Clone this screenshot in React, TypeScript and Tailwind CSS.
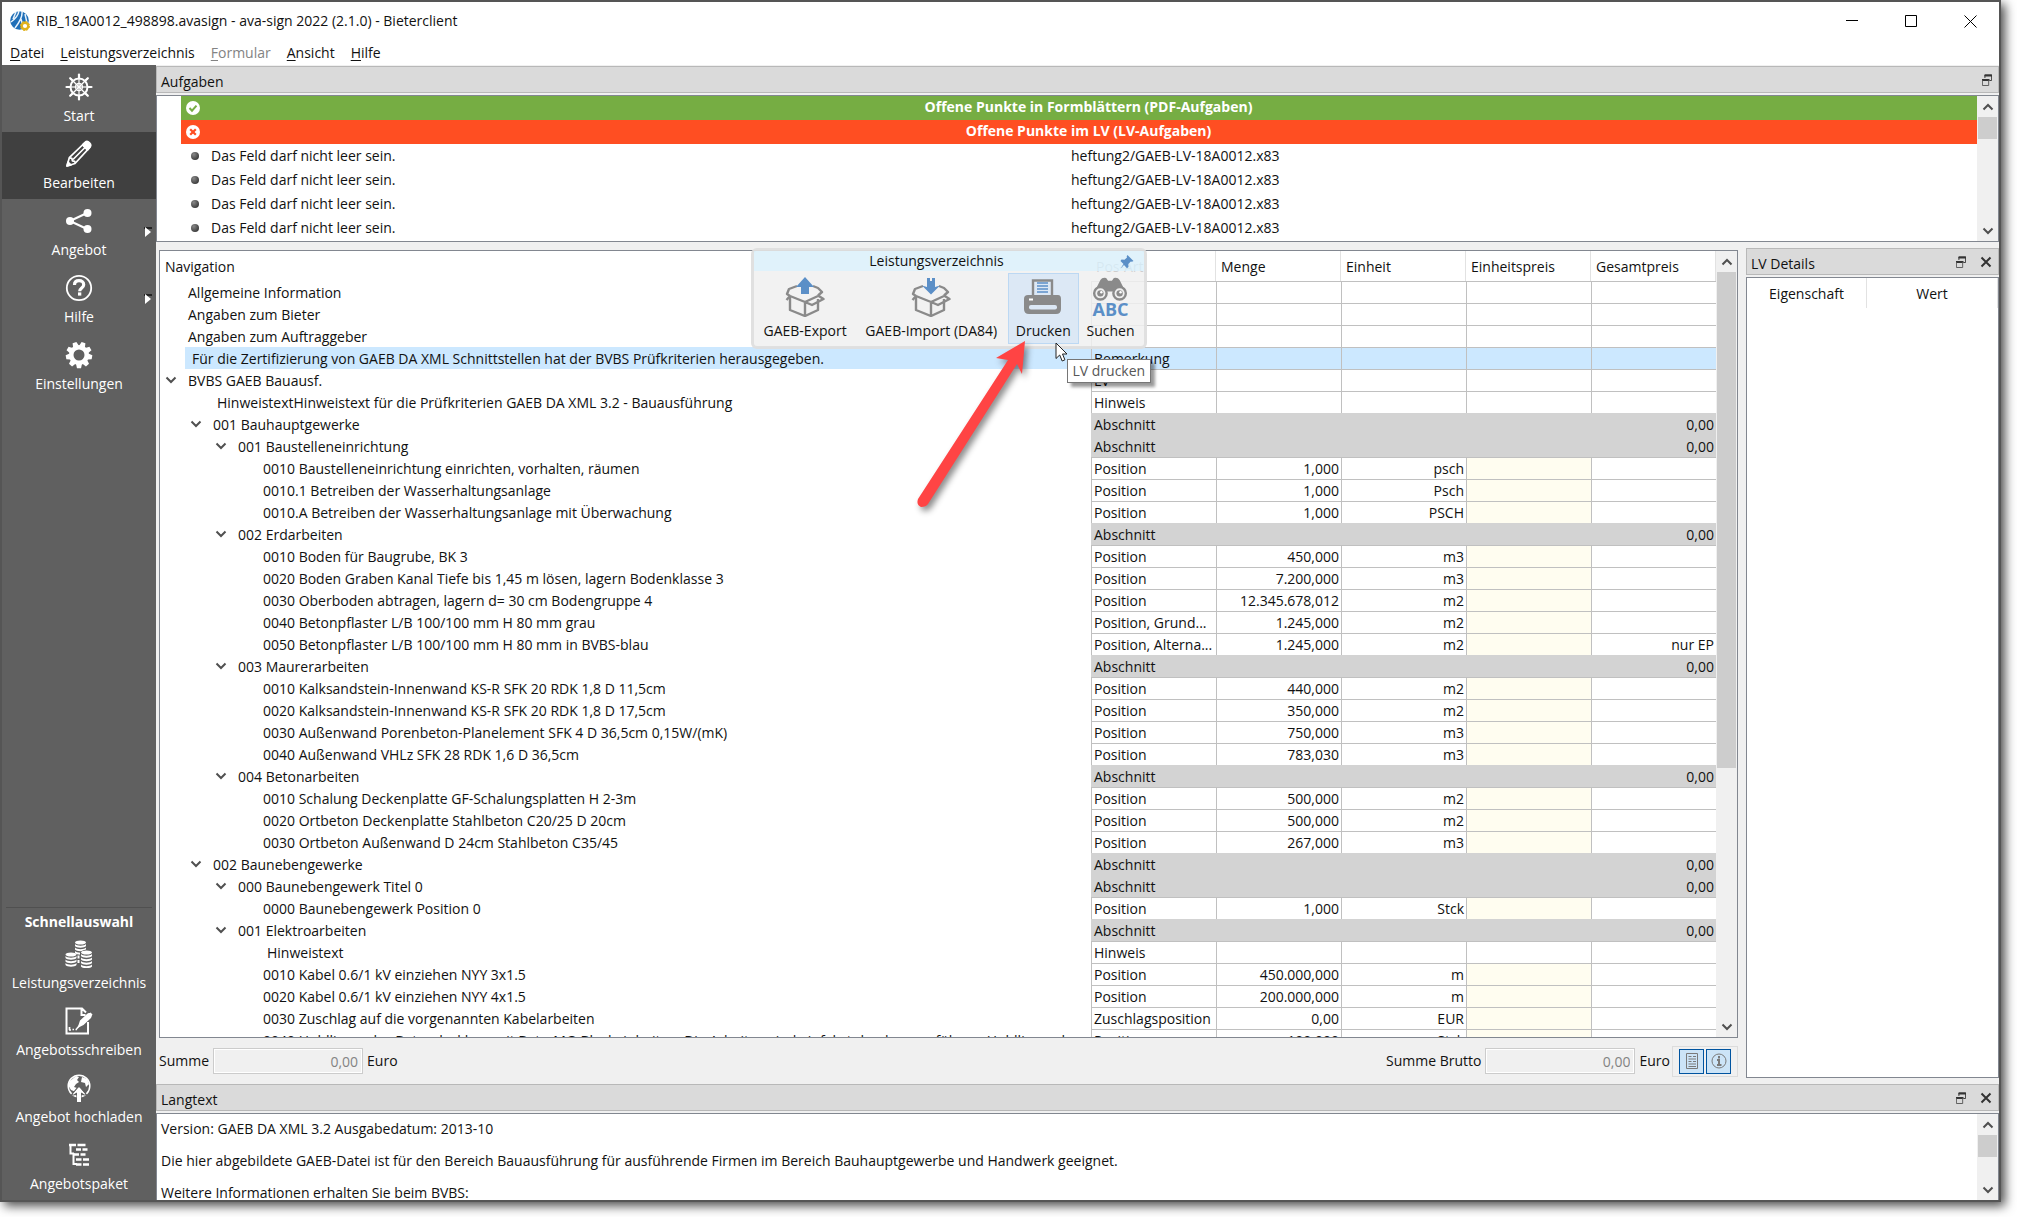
import type { ReactNode } from 'react';
import clsx from 'clsx';

type Kind = 'info' | 'note' | 'section' | 'position';

interface Row {
  level: number;
  text: string;
  kind: Kind;
  type?: string;
  amount?: string;
  unit?: string;
  total?: string;
  open?: boolean;
  selected?: boolean;
}

const section = (level: number, text: string): Row => ({ level, text, kind: 'section', type: 'Abschnitt', total: '0,00', open: true });
const position = (text: string, amount: string, unit: string, type = 'Position', total = ''): Row => ({ level: 3, text, kind: 'position', type, amount, unit, total });

const rows: Row[] = [
  { level: 0, text: 'Allgemeine Information', kind: 'info' },
  { level: 0, text: 'Angaben zum Bieter', kind: 'info' },
  { level: 0, text: 'Angaben zum Auftraggeber', kind: 'info' },
  { level: 0, text: 'Für die Zertifizierung von GAEB DA XML Schnittstellen hat der BVBS Prüfkriterien herausgegeben.', kind: 'note', type: 'Bemerkung', selected: true },
  { level: 0, text: 'BVBS GAEB Bauausf.', kind: 'info', type: 'LV', open: true },
  { level: 1, text: 'HinweistextHinweistext für die Prüfkriterien GAEB DA XML 3.2 - Bauausführung', kind: 'note', type: 'Hinweis' },
  section(1, '001 Bauhauptgewerke'),
  section(2, '001 Baustelleneinrichtung'),
  position('0010 Baustelleneinrichtung einrichten, vorhalten, räumen', '1,000', 'psch'),
  position('0010.1 Betreiben der Wasserhaltungsanlage', '1,000', 'Psch'),
  position('0010.A Betreiben der Wasserhaltungsanlage mit Überwachung', '1,000', 'PSCH'),
  section(2, '002 Erdarbeiten'),
  position('0010 Boden für Baugrube, BK 3', '450,000', 'm3'),
  position('0020 Boden Graben Kanal Tiefe bis 1,45 m lösen, lagern Bodenklasse 3', '7.200,000', 'm3'),
  position('0030 Oberboden abtragen, lagern d= 30 cm Bodengruppe 4', '12.345.678,012', 'm2'),
  position('0040 Betonpflaster L/B 100/100 mm H 80 mm grau', '1.245,000', 'm2', 'Position, Grund...'),
  position('0050 Betonpflaster L/B 100/100 mm H 80 mm in BVBS-blau', '1.245,000', 'm2', 'Position, Alterna...', 'nur EP'),
  section(2, '003 Maurerarbeiten'),
  position('0010 Kalksandstein-Innenwand KS-R SFK 20 RDK 1,8 D 11,5cm', '440,000', 'm2'),
  position('0020 Kalksandstein-Innenwand KS-R SFK 20 RDK 1,8 D 17,5cm', '350,000', 'm2'),
  position('0030 Außenwand Porenbeton-Planelement SFK 4 D 36,5cm 0,15W/(mK)', '750,000', 'm3'),
  position('0040 Außenwand VHLz SFK 28 RDK 1,6 D 36,5cm', '783,030', 'm3'),
  section(2, '004 Betonarbeiten'),
  position('0010 Schalung Deckenplatte GF-Schalungsplatten H 2-3m', '500,000', 'm2'),
  position('0020 Ortbeton Deckenplatte Stahlbeton C20/25 D 20cm', '500,000', 'm2'),
  position('0030 Ortbeton Außenwand D 24cm Stahlbeton C35/45', '267,000', 'm3'),
  section(1, '002 Baunebengewerke'),
  section(2, '000 Baunebengewerk Titel 0'),
  position('0000 Baunebengewerk Position 0', '1,000', 'Stck'),
  section(2, '001 Elektroarbeiten'),
  { level: 3, text: 'Hinweistext', kind: 'note', type: 'Hinweis' },
  position('0010 Kabel 0.6/1 kV einziehen NYY 3x1.5', '450.000,000', 'm'),
  position('0020 Kabel 0.6/1 kV einziehen NYY 4x1.5', '200.000,000', 'm'),
  position('0030 Zuschlag auf die vorgenannten Kabelarbeiten', '0,00', 'EUR', 'Zuschlagsposition'),
  position('0040 Hohlliegendes Betondeckbau mit Beto-MG-Blockeinheiten. Die Arbeiten sind einfahrt durch auszuführen. Hohlliegend', '100,000', 'Stck'),
];

const indents = ['pl-[3px]', 'pl-[28px]', 'pl-[53px]', 'pl-[78px]'];

const Chevron = ({ up, className }: { up?: boolean; className?: string }) => (
  <svg viewBox="0 0 12 12" className={clsx('size-3', className)} fill="none" stroke="#505050" strokeWidth="2">
    <path d={up ? 'M1.500 8.500L6 4l4.500 4.500' : 'M1.500 3.500L6 8l4.500-4.500'} />
  </svg>
);

const ScrollBar = ({ thumb }: { thumb: string }) => (
  <div className="flex w-[21px] shrink-0 flex-col bg-[#f0f0f0]">
    <button type="button" aria-label="Nach oben" className="flex h-[21px] shrink-0 items-center justify-center"><Chevron up /></button>
    <div className="min-h-0 flex-1"><div className={clsx('mx-px bg-[#cdcdcd]', thumb)} /></div>
    <button type="button" aria-label="Nach unten" className="flex h-[21px] shrink-0 items-center justify-center"><Chevron /></button>
  </div>
);

const DockTitle = ({ title, closable = true }: { title: string; closable?: boolean }) => (
  <div className="flex h-[27px] shrink-0 items-center border border-[#b8b8b8] bg-[#dadada] pr-1.5 pl-1">
    <h2 className="flex-1 pt-1">{title}</h2>
    <button type="button" aria-label="Lösen">
      <svg viewBox="0 0 12 12" className="h-3 w-2.5" preserveAspectRatio="none" fill="none" stroke="#333">
        <path d="M3.500 4V1h8v5.500H9" />
        <path d="M3 1.500h9M0 6h9" strokeWidth="2" />
        <path d="M.5 6v5.500h7.500V6" stroke="#555" />
      </svg>
    </button>
    {closable && (
      <button type="button" aria-label="Schließen" className="ml-3.5">
        <svg viewBox="0 0 12 12" className="size-3" stroke="#333" strokeWidth="2"><path d="M1.500 1.500l9 9M10.500 1.500l-9 9" /></svg>
      </button>
    )}
  </div>
);

const SideButton = ({ label, icon, active, submenu }: { label: string; icon: ReactNode; active?: boolean; submenu?: boolean }) => (
  <button type="button" className={clsx('relative flex h-[67px] w-full shrink-0 flex-col items-center pt-2 text-white', active && 'bg-[#404040]')}>
    <svg viewBox="0 0 28 28" className="size-7" fill="currentColor" stroke="none">{icon}</svg>
    <span className="mt-[5px] whitespace-nowrap">{label}</span>
    {submenu && (
      <svg viewBox="0 0 8 10" className="absolute top-7 right-1 h-2.5 w-2"><path d="M0 1h8" stroke="#111" strokeWidth="1.500" /><path d="M1 0l6 5-6 5z" fill="#fff" /></svg>
    )}
  </button>
);

const spokes = [0, 45, 90, 135, 180, 225, 270, 315];
const teeth = [0, 40, 80, 120, 160, 200, 240, 280, 320];

const wheelIcon = (
  <g fill="none" stroke="currentColor">
    <circle cx="14" cy="14" r="8.500" strokeWidth="2" />
    <circle cx="14" cy="14" r="3.500" strokeWidth="1.300" />
    <circle cx="14" cy="14" r="1.300" fill="currentColor" stroke="none" />
    {spokes.map((a) => (
      <g key={a} transform={`rotate(${a} 14 14)`}>
        <path d="M14 14V2" strokeWidth="1.200" />
        <path d="M14 4.500V1.500" strokeWidth="2.200" strokeLinecap="round" />
      </g>
    ))}
  </g>
);

const pencilIcon = (
  <g fill="none" stroke="currentColor" strokeWidth="1.700" strokeLinejoin="round">
    <path d="M2 26l2.300-8.300L20 2.500c1.500-1.500 3-1.200 4.500.3s1.700 3 .3 4.500L10 23.500z" />
    <path d="M4.300 17.700l2.500.7.600 2.400 2.300.5.600 2M17.500 5l5.300 5.300M8 19.500L20 7.500" />
    <path d="M2 26l1-4 3 3zM20 2.500c1.500-1.500 6 3 4.800 4.800l-2 2.300-5-5z" fill="currentColor" />
  </g>
);

const shareIcon = (
  <>
    <path d="M5 14L22 6M5 14l17 8" stroke="currentColor" strokeWidth="2" />
    <circle cx="5" cy="14" r="4" />
    <circle cx="22.500" cy="6" r="4" />
    <circle cx="22.500" cy="22" r="4" />
  </>
);

const helpIcon = (
  <g fill="none" stroke="currentColor">
    <circle cx="14" cy="14" r="12.200" strokeWidth="1.800" />
    <path d="M9.500 11c0-3 2-4.300 4.500-4.300 2.700 0 4.700 1.600 4.700 4 0 3.300-4 3.200-4 6.600" strokeWidth="3.200" />
    <path d="M13 20h3.300" strokeWidth="3.200" />
  </g>
);

const gearIcon = (
  <>
    <circle cx="14" cy="14" r="7.800" fill="none" stroke="currentColor" strokeWidth="4.600" />
    {teeth.map((a) => (
      <path key={a} d="M11 5l1-4.200h4L17 5z" transform={`rotate(${a + 20} 14 14)`} />
    ))}
  </>
);

const Coins = ({ x, y, n }: { x: number; y: number; n: number }) => (
  <g transform={`translate(${x} ${y})`}>
    <ellipse cx="5.500" cy="2" rx="5.500" ry="2" />
    {Array.from({ length: n }, (_, i) => (
      <path key={i} d="M0 3.500c1.500 2.300 9.500 2.300 11 0v2c-1.500 2.300-9.500 2.300-11 0z" transform={`translate(0 ${i * 3.5})`} />
    ))}
  </g>
);

const coinsIcon = (
  <>
    <Coins x={10} y={0.5} n={3} />
    <path d="M12.500 15.500h2v3h-2zM12.500 20h2v3h-2z" />
    <Coins x={0.5} y={12.5} n={3} />
    <path d="M15 12q6.500-5 13 0v4H15z" fill="#606060" />
    <Coins x={16} y={10.5} n={4} />
  </>
);

const letterIcon = (
  <g fill="none" stroke="currentColor" strokeWidth="2">
    <path d="M23 15v11.500H1.500v-25H17l4 4M16.500 2v6h4" />
    <path d="M12.500 21l2.500-7.500L22 7c1.500-1.500 2.500-.5 3.500-1.500l2 2c-1 1-.5 2.500-2 4L18.500 18z" fill="currentColor" stroke="none" />
    <path d="M4.500 20v3M4 23h2M7.500 22.500h1.500M10.500 22.500h1.500" strokeWidth="1.700" />
    <path d="M11.500 22l8-9" strokeWidth="1.500" />
  </g>
);

const globeIcon = (
  <>
    <circle cx="14" cy="12" r="10.800" fill="none" stroke="currentColor" strokeWidth="1.500" />
    <path d="M5 7l6-5 3 1-2 3 2 2-3 2-2 3 3 1-1 4-5-2-3-5zM17 3l5 2 2 5-3 3-1-4-4-1z" />
    <path d="M14 12l7.500 9h-2.500l-3-2.500V28h-4v-9.500L9 21H6.500z" stroke="#606060" strokeWidth="1.200" />
    <path d="M14 13l6.500 7.500-4.500-2V28h-4v-9.500l-4.500 2z" />
  </>
);

const treeIcon = (
  <g fill="none" stroke="currentColor" strokeWidth="2.400">
    <path d="M5.500 3v9.500H9M8.500 12v11H12" strokeWidth="2" />
    <path d="M4 4h7M12.500 4h8M11 8.500h5M17.500 8.500h5M9 13.500h5M15.500 13.500h5M11 18.500h5.500M18 18.500h6M11 23.500h5.500M18 23.500h6" />
  </g>
);

const Box = ({ children }: { children: ReactNode }) => (
  <svg viewBox="0 0 40 40" className="size-10" fill="none" stroke="#8a8a8a" strokeWidth="2.400" strokeLinejoin="round">
    <path d="M5 20v13l15 6 13-6V22" />
    <path d="M20 25v14M5 19l15 6 13-6M5 19L1.500 23M5 19l-3-2 2-5 8-3M33 18.500L38.500 22 27 28l-7-3M33 18.500l4-3.500-4-4-5-2" />
    {children}
  </svg>
);

const exportIcon = <Box><path d="M20 0l9 10h-5v7h-8v-7h-5z" fill="#5b8fc7" stroke="none" /></Box>;
const importIcon = <Box><path d="M20 17.500l9-9-5 1.500V1h-3v3h-2V1h-3v9l-5-1.500z" fill="#5b8fc7" stroke="none" /></Box>;

const printIcon = (
  <svg viewBox="0 0 40 40" className="size-10">
    <path d="M10 18V3.500h19V18" fill="none" stroke="#8a8a8a" strokeWidth="2.400" />
    <path d="M14 6h11M14 9h11M14 12h11M14 15h11" stroke="#5b8fc7" strokeWidth="1.500" />
    <path d="M5 18h30q3 0 3 4v10q0 5-5 5H6q-5 0-5-5V22q0-4 4-4z" fill="#8a8a8a" />
    <rect x="6" y="28" width="28" height="4.500" rx="2" fill="#dce8f5" />
    <rect x="6" y="21.500" width="4" height="2" fill="#fff" />
  </svg>
);

const searchIcon = (
  <div className="flex h-10 flex-col items-center">
    <svg viewBox="0 0 36 25" className="h-[25px] w-9">
      <path d="M2 15l6-12q2-3 6-2l2 3h4l2-3q4-1 6 2l6 12z" fill="#8a8a8a" />
      <circle cx="8" cy="17" r="6.500" fill="#efefef" stroke="#8a8a8a" strokeWidth="2.500" />
      <circle cx="28" cy="17" r="6.500" fill="#efefef" stroke="#8a8a8a" strokeWidth="2.500" />
      <circle cx="8" cy="17" r="3.300" fill="#8a8a8a" />
      <circle cx="28" cy="17" r="3.300" fill="#8a8a8a" />
      <circle cx="9" cy="16" r="1.300" fill="#fff" />
      <circle cx="29" cy="16" r="1.300" fill="#fff" />
    </svg>
    <span className="text-lg leading-4 font-bold text-[#5b8fc7]">ABC</span>
  </div>
);

const ToolButton = ({ label, icon, active }: { label: string; icon: ReactNode; active?: boolean }) => (
  <button type="button" className={clsx('flex h-[71px] flex-col items-center border px-[7px] pt-[3px] whitespace-nowrap last:px-1', active ? 'border-[#bcd8f3] bg-[#dce8f5]' : 'border-transparent')}>
    {icon}
    <span className="mt-1">{label}</span>
  </button>
);

const LvToolbar = () => (
  <div className="absolute -top-[3px] left-1/2 z-10 h-[101px] w-[396px] -translate-x-1/2 rounded-md border-[3px] border-[#d8d8d8]/70 bg-[#f0f0f0]/85">
    <div className="relative h-5 bg-[#d9f2ff]/70 text-center leading-5">
      <span className="mr-6">Leistungsverzeichnis</span>
      <svg viewBox="0 0 14 14" className="absolute top-1 right-2.5 size-3.5" fill="#5b8fc7">
        <path d="M7.500 0l6 6-1.500.8-1.200-.3-2.500 2.500.2 3-1.500 1.200L4 10 .5 13.500 3.500 9 .5 6l1-1.500 3 .2L7 2.500l-.3-1.200z" />
      </svg>
    </div>
    <div className="flex items-start justify-between pt-0.5 pr-1 pl-0.5">
      <ToolButton label="GAEB-Export" icon={exportIcon} />
      <ToolButton label="GAEB-Import (DA84)" icon={importIcon} />
      <ToolButton label="Drucken" icon={printIcon} active />
      <ToolButton label="Suchen" icon={searchIcon} />
    </div>
    <svg viewBox="0 0 124 178" className="pointer-events-none absolute top-[88px] left-[158px] h-[178px] w-[124px] overflow-visible" style={{ filter: 'drop-shadow(3px 4px 3px rgba(0,0,0,.45))' }}>
      <path d="M113 2L84 19l12 2L6 160q-2 6 3 8 5 0 7-3L105 25l5 10z" fill="#ff4444" />
    </svg>
    <div role="tooltip" className="absolute top-[108px] left-[313px] flex h-6 items-center border border-[#767676] bg-white px-[5px] whitespace-nowrap text-[#575757] shadow-[4px_4px_3px_rgba(0,0,0,0.4)]">LV drucken</div>
    <svg viewBox="0 0 13 20" className="absolute top-[91px] left-[301px] h-5 w-[13px]"><path d="M1 1v15.500l3.700-3.500 2.500 6 2.700-1.200L7.500 12H12z" fill="#fff" stroke="#222" /></svg>
  </div>
);

const Logo = () => (
  <svg viewBox="0 0 20 20" className="size-5">
    <circle cx="9.500" cy="9.500" r="9.300" fill="#1f6fb8" />
    <path d="M9 0q-1 6-8 11M12 0q1 7-7 17M6 1L3 8M11 8l3 11M15 3l2 9" fill="none" stroke="#e8f3fc" strokeWidth="1.500" />
    <circle cx="15" cy="15" r="3.300" fill="#fff" stroke="#e0b21c" strokeWidth="2.400" />
    <circle cx="15" cy="15" r="4.500" fill="none" stroke="#e0b21c" strokeWidth="1" strokeDasharray="2 1.500" />
  </svg>
);

const menu = [
  { key: 'D', rest: 'atei' },
  { key: 'L', rest: 'eistungsverzeichnis' },
  { key: 'F', rest: 'ormular', disabled: true },
  { key: 'A', rest: 'nsicht' },
  { key: 'H', rest: 'ilfe' },
];

const TaskPanel = () => (
  <div className="mt-0.5 flex h-[147px] shrink-0 overflow-hidden border border-[#828790] bg-white">
    <table className="h-36 flex-1 table-fixed border-separate border-spacing-0">
      <tbody>
        <tr>
          <th colSpan={2} className="h-6 p-0 font-bold text-white">
            <div className="ml-6 flex h-6 items-center bg-[#76ad43] pl-[5px]">
              <svg viewBox="0 0 14 14" className="size-3.5"><circle cx="7" cy="7" r="7" fill="#fff" /><path d="M3.500 7l2.500 2.700 4.500-5" fill="none" stroke="#76ad43" strokeWidth="2" /></svg>
              <span className="flex-1 pb-0.5">Offene Punkte in Formblättern (PDF-Aufgaben)</span>
            </div>
          </th>
        </tr>
        <tr>
          <th colSpan={2} className="h-6 p-0 font-bold text-white">
            <div className="ml-6 flex h-6 items-center bg-[#ff4e22] pl-[5px]">
              <svg viewBox="0 0 14 14" className="size-3.5"><circle cx="7" cy="7" r="7" fill="#fff" /><path d="M4.200 4.200l5.600 5.600M9.800 4.200L4.200 9.800" stroke="#ff4e22" strokeWidth="2.200" /></svg>
              <span className="flex-1 pb-0.5">Offene Punkte im LV (LV-Aufgaben)</span>
            </div>
          </th>
        </tr>
        {[1, 2, 3, 4].map((n) => (
          <tr key={n}>
            <td className="h-6 w-1/2 p-0">
              <div className="flex items-center pl-[34px]">
                <span className="size-2 rounded-full bg-radial-[at_35%_30%] from-[#888] to-[#222]" />
                <span className="ml-3">Das Feld darf nicht leer sein.</span>
              </div>
            </td>
            <td className="h-6 w-1/2 p-0 pl-1">heftung2/GAEB-LV-18A0012.x83</td>
          </tr>
        ))}
      </tbody>
    </table>
    <ScrollBar thumb="h-[22px]" />
  </div>
);

const LvTable = () => (
  <div className="relative flex min-h-0 flex-1 border border-[#828790] bg-white">
    <div className="min-w-0 flex-1 overflow-hidden">
      <table className="w-full table-fixed border-separate border-spacing-0">
        <thead>
          <tr className="text-left">
            <th className="h-[30px] p-0 pt-0.5 pl-[5px] font-normal">Navigation</th>
            {['Pos-Art', 'Menge', 'Einheit', 'Einheitspreis', 'Gesamtpreis'].map((h) => (
              <th key={h} className="h-[30px] w-[125px] border-r border-[#e2e2e2] p-0 pt-0.5 pl-[5px] font-normal">{h}</th>
            ))}
          </tr>
        </thead>
        <tbody>
          {rows.map((row, i) => {
            const cell = clsx(
              'h-[22px] border-t border-l p-0 px-0.5 leading-5 whitespace-nowrap',
              row.kind === 'section' ? 'border-[#d3d3d3] bg-[#d3d3d3]' : 'border-[#c0c0c0]',
              row.selected && 'bg-[#cce8ff]'
            );
            return (
              <tr key={i}>
                <td className="h-[22px] overflow-hidden p-0 whitespace-nowrap">
                  <div className={clsx('flex h-[22px] items-center', indents[row.level])}>
                    <span className="flex w-[22px] shrink-0 justify-start pl-0.5">{row.open && <Chevron />}</span>
                    <span className={clsx('h-[22px] flex-1 overflow-hidden leading-6', row.kind === 'note' ? 'pl-[7px]' : 'pl-[3px]', row.selected && 'bg-[#cce8ff]')}>{row.text}</span>
                  </div>
                </td>
                <td className={cell}>{row.type}</td>
                <td className={clsx(cell, 'text-right')}>{row.amount}</td>
                <td className={clsx(cell, 'text-right')}>{row.unit}</td>
                <td className={clsx(cell, row.kind === 'position' && 'bg-[#fffdf0]')} />
                <td className={clsx(cell, 'text-right')}>{row.total}</td>
              </tr>
            );
          })}
        </tbody>
      </table>
    </div>
    <ScrollBar thumb="h-2/3" />
    <LvToolbar />
  </div>
);

const SumField = ({ id, label }: { id: string; label: string }) => (
  <div className="flex items-center">
    <label htmlFor={id}>{label}</label>
    <input id={id} disabled defaultValue="0,00" className="mx-1 h-[26px] w-[150px] border border-[#ccc] bg-[#f0f0f0] px-1 text-right text-[#838383] ring-1 ring-white ring-inset" />
    <span>Euro</span>
  </div>
);

export default function App() {
  return (
    <div className="h-screen overflow-hidden bg-white pr-4 pb-[15px] font-['Open_Sans','Noto_Sans',sans-serif] text-sm leading-5 text-[#111]">
      <div className="flex h-full flex-col border-2 border-[#555] bg-white shadow-[4px_4px_10px_rgba(0,0,0,0.7)]">
        <header className="flex h-[38px] shrink-0 items-center pl-2">
          <Logo />
          <h1 className="ml-1.5 flex-1">RIB_18A0012_498898.avasign - ava-sign 2022 (2.1.0) - Bieterclient</h1>
          <div className="flex gap-[46px] pr-[22px]">
            <button type="button" aria-label="Minimieren"><svg viewBox="0 0 13 13" className="size-[13px]"><path d="M0 5.500h12" stroke="#000" /></svg></button>
            <button type="button" aria-label="Maximieren"><svg viewBox="0 0 13 13" className="size-[13px]"><path d="M.5.5h11v11H.5z" fill="none" stroke="#000" /></svg></button>
            <button type="button" aria-label="Beenden"><svg viewBox="0 0 13 13" className="size-[13px]"><path d="M.5.5l12 12M12.500.5l-12 12" stroke="#000" /></svg></button>
          </div>
        </header>
        <nav className="flex h-[25px] shrink-0 items-center gap-4 pl-2">
          {menu.map(({ key, rest, disabled }) => (
            <button key={key} type="button" disabled={disabled} className="disabled:text-[#838383]">
              <span className="underline underline-offset-2">{key}</span>{rest}
            </button>
          ))}
        </nav>
        <div className="flex min-h-0 flex-1 bg-[#f0f0f0]">
          <aside className="flex w-[154px] shrink-0 flex-col bg-[#606060]">
            <SideButton label="Start" icon={wheelIcon} />
            <SideButton label="Bearbeiten" icon={pencilIcon} active />
            <SideButton label="Angebot" icon={shareIcon} submenu />
            <SideButton label="Hilfe" icon={helpIcon} submenu />
            <SideButton label="Einstellungen" icon={gearIcon} />
            <div className="mx-1 mt-auto border-t border-[#505050] pt-1 text-center font-bold text-white">Schnellauswahl</div>
            <SideButton label="Leistungsverzeichnis" icon={coinsIcon} />
            <SideButton label="Angebotsschreiben" icon={letterIcon} />
            <SideButton label="Angebot hochladen" icon={globeIcon} />
            <SideButton label="Angebotspaket" icon={treeIcon} />
          </aside>
          <main className="flex min-w-0 flex-1 flex-col pt-px">
            <DockTitle title="Aufgaben" closable={false} />
            <TaskPanel />
            <div className="flex min-h-0 flex-1 gap-2">
              <section className="flex min-w-0 flex-1 flex-col pt-2 pl-[3px]">
                <LvTable />
                <div className="flex h-[46px] shrink-0 items-center">
                  <SumField id="netto" label="Summe" />
                  <div className="flex-1" />
                  <SumField id="brutto" label="Summe Brutto" />
                  <div className="ml-0.5 flex gap-0.5 border border-[#dcdcdc] px-1.5 py-0.5">
                    <button type="button" aria-label="Langtext" className="flex size-[25px] items-center justify-center border border-[#0054a0] bg-[#cce4f7]">
                      <svg viewBox="0 0 14 16" className="h-4 w-3.5" fill="none" stroke="#7a7a7a"><path d="M1.500.5h11v15h-11z" /><path d="M3.500 3.500h3M8 3.500h3M3.500 6h7.500M3.500 8.500h3M8 8.500h3M3.500 11h7.500M3.500 13.500h7.500" /></svg>
                    </button>
                    <button type="button" aria-label="LV Details" className="flex size-[25px] items-center justify-center border border-[#0054a0] bg-[#cce4f7]">
                      <svg viewBox="0 0 16 16" className="size-4" fill="none" stroke="#7a7a7a"><circle cx="8" cy="8" r="7" /><path d="M8 3v2.500M6 7h2v5M6 12h4.500" strokeWidth="2" /></svg>
                    </button>
                  </div>
                </div>
              </section>
              <section className="flex w-[253px] shrink-0 flex-col pt-1.5 pb-1.5">
                <DockTitle title="LV Details" />
                <div className="mt-0.5 flex-1 border border-[#828790] bg-white">
                  <table className="w-full table-fixed border-separate border-spacing-0">
                    <thead>
                      <tr>
                        <th className="h-[30px] w-[120px] border-r border-[#e2e2e2] p-0 pt-0.5 font-normal">Eigenschaft</th>
                        <th className="h-[30px] border-r border-[#e2e2e2] p-0 pt-0.5 font-normal">Wert</th>
                      </tr>
                    </thead>
                  </table>
                </div>
              </section>
            </div>
            <DockTitle title="Langtext" />
            <div className="mt-0.5 flex h-[87px] shrink-0 border border-b-0 border-[#828790] bg-white">
              <div className="flex-1 space-y-3 overflow-hidden px-1 pt-[5px]">
                <p>Version: GAEB DA XML 3.2 Ausgabedatum: 2013-10</p>
                <p>Die hier abgebildete GAEB-Datei ist für den Bereich Bauausführung für ausführende Firmen im Bereich Bauhauptgewerbe und Handwerk geeignet.</p>
                <p>Weitere Informationen erhalten Sie beim BVBS:</p>
              </div>
              <ScrollBar thumb="h-[22px]" />
            </div>
          </main>
        </div>
      </div>
    </div>
  );
}
